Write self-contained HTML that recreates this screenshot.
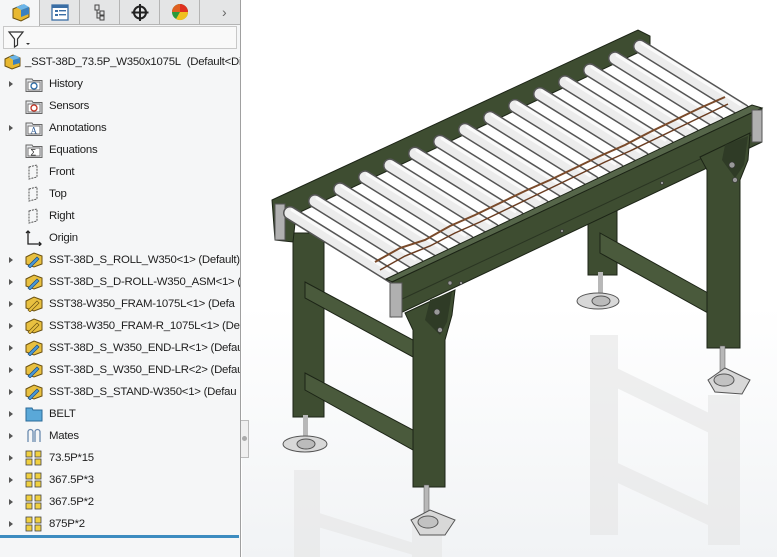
<!DOCTYPE html>
<html><head><meta charset="utf-8"><style>
*{margin:0;padding:0;box-sizing:border-box}
body{width:777px;height:557px;overflow:hidden;background:#fff;font-family:"Liberation Sans",sans-serif;position:relative}
#panel{position:absolute;left:0;top:0;width:241px;height:557px;background:#f5f6f7;border-right:1px solid #a0a0a0}
#tabs{position:absolute;left:0;top:0;width:240px;height:25px;background:#e4e5e6;border-bottom:1px solid #b4b4b4}
.tab{position:absolute;top:0;width:40px;height:25px;border-right:1px solid #b4b4b4}
#filter{position:absolute;left:3px;top:26px;width:234px;height:23px;border:1px solid #c8c8c8;background:#f9f9f9}
.row{position:absolute;left:0;height:22px;line-height:22px;font-size:11.4px;letter-spacing:-0.25px;color:#1e1e1e;white-space:nowrap;width:240px;overflow:hidden}
.arr{position:absolute;left:9px;top:8px;width:0;height:0;border-left:4px solid #555;border-top:3.5px solid transparent;border-bottom:3.5px solid transparent}
.ic{position:absolute;left:25px;top:3px;width:18px;height:16px}
.tx{position:absolute;left:49px;top:0}
#view{position:absolute;left:242px;top:0;width:535px;height:557px;background:linear-gradient(#ffffff 0%,#ffffff 55%,#f1f3f5 100%)}
</style></head><body>
<div id="view">
<svg width="535" height="557" viewBox="242 0 535 557" style="position:absolute;left:0;top:0">
<!-- reflections -->
<g fill="#e6e6e6" opacity="0.6">
<rect x="294" y="470" width="26" height="87"/>
<rect x="412" y="520" width="30" height="37"/>
<polygon points="294,505 420,545 420,557 294,520"/>
<rect x="590" y="335" width="28" height="200"/>
<rect x="708" y="395" width="32" height="150"/>
<polygon points="590,355 740,428 740,448 590,375"/>
<polygon points="590,450 740,520 740,540 590,470"/>
</g>
<!-- back legs -->
<g fill="#3e4d31" stroke="#1c2416" stroke-width="1">
<rect x="293" y="233" width="31" height="184"/>
<rect x="588" y="205" width="29" height="70"/>
</g>
<!-- back feet -->
<g>
<rect x="303" y="415" width="5" height="28" fill="#b8b8b8"/>
<ellipse cx="305" cy="444" rx="22" ry="8" fill="#d8d8d8" stroke="#555"/>
<ellipse cx="306" cy="444" rx="9" ry="5" fill="#bbb" stroke="#555"/>
<rect x="598" y="272" width="5" height="28" fill="#b8b8b8"/>
<ellipse cx="598" cy="301" rx="21" ry="8" fill="#d8d8d8" stroke="#555"/>
<ellipse cx="601" cy="301" rx="9" ry="5" fill="#bbb" stroke="#555"/>
</g>
<!-- crossbars -->
<g fill="#4a5a3c" stroke="#1c2416" stroke-width="1">
<polygon points="305,282 413,340 413,357 305,298"/>
<polygon points="305,373 413,430 413,450 305,390"/>
<polygon points="600,233 708,293 708,313 600,253"/>
</g>
<!-- back rail -->
<polygon points="272,200 638,30 650,36 650,47 296,214 293,242 275,240" fill="#3e4d31" stroke="#1c2416"/>
<rect x="275" y="204" width="10" height="36" fill="#b0b0b0" stroke="#555"/>
<!-- rollers -->
<g stroke-linecap="round">
<g id="r">
<line x1="290" y1="213" x2="393" y2="277" stroke="#555" stroke-width="14"/>
<line x1="290" y1="213" x2="393" y2="277" stroke="#ececec" stroke-width="11"/>
<line x1="292" y1="210" x2="390" y2="271" stroke="#fafafa" stroke-width="3"/>
</g>
<use href="#r" transform="translate(25,-11.9)"/>
<use href="#r" transform="translate(50,-23.8)"/>
<use href="#r" transform="translate(75,-35.7)"/>
<use href="#r" transform="translate(100,-47.6)"/>
<use href="#r" transform="translate(125,-59.5)"/>
<use href="#r" transform="translate(150,-71.4)"/>
<use href="#r" transform="translate(175,-83.3)"/>
<use href="#r" transform="translate(200,-95.2)"/>
<use href="#r" transform="translate(225,-107.1)"/>
<use href="#r" transform="translate(250,-119)"/>
<use href="#r" transform="translate(275,-130.9)"/>
<use href="#r" transform="translate(300,-142.8)"/>
<use href="#r" transform="translate(325,-154.7)"/>
<use href="#r" transform="translate(350,-166.6)"/>
</g>
<!-- chains -->
<polyline points="375,262 400,248 425,240 450,226 475,215 500,203 525,191 550,180 575,168 600,156 625,145 650,132 675,120 700,108 725,97" fill="none" stroke="#7a4a2a" stroke-width="2"/>
<polyline points="380,270 405,256 430,246 455,233 480,222 505,210 530,198 555,186 580,174 605,162 630,151 655,139 680,127 705,115 728,104" fill="none" stroke="#6a3c20" stroke-width="1.5"/>
<!-- front rail -->
<polygon points="386,279 752,105 762,108 392,282" fill="#56664a" stroke="#1c2416"/>
<polygon points="392,282 762,108 762,142 392,317" fill="#3e4d31" stroke="#1c2416"/>
<line x1="400" y1="300" x2="760" y2="131" stroke="#2a3522" stroke-width="1"/>
<rect x="390" y="283" width="12" height="34" fill="#b0b0b0" stroke="#555"/>
<rect x="752" y="110" width="10" height="32" fill="#b0b0b0" stroke="#555"/>
<!-- front legs -->
<g fill="#3e4d31" stroke="#1c2416">
<polygon points="405,313 455,290 452,315 445,340 445,487 413,487 413,330"/>
<polygon points="700,157 750,133 748,160 740,180 740,348 707,348 707,170"/>
</g>
<g fill="#2f3b26">
<polygon points="430,300 452,292 447,322 440,335 425,320"/>
<polygon points="725,145 748,136 744,165 735,178 722,160"/>
</g>
<g fill="#999" stroke="#333" stroke-width="0.6">
<circle cx="437" cy="312" r="3"/><circle cx="440" cy="330" r="2.5"/>
<circle cx="732" cy="165" r="3"/><circle cx="735" cy="180" r="2.5"/>
<circle cx="450" cy="283" r="2"/><circle cx="461" cy="283" r="1.5"/><circle cx="562" cy="231" r="1.5"/><circle cx="662" cy="183" r="1.5"/>
</g>
<!-- front feet -->
<g>
<rect x="424" y="485" width="5" height="30" fill="#b8b8b8" stroke="#555" stroke-width="0.5"/>
<polygon points="411,520 430,510 455,520 445,535 420,535" fill="#d8d8d8" stroke="#555"/>
<ellipse cx="428" cy="522" rx="10" ry="6" fill="#c2c2c2" stroke="#555"/>
<rect x="720" y="346" width="5" height="28" fill="#b8b8b8" stroke="#555" stroke-width="0.5"/>
<polygon points="708,380 725,368 750,380 742,394 715,392" fill="#d8d8d8" stroke="#555"/>
<ellipse cx="724" cy="380" rx="10" ry="6" fill="#c2c2c2" stroke="#555"/>
</g>
</svg>
</div>

<div id="panel">
<div id="tabs">
<div class="tab" style="left:0;background:#f5f6f7;height:26px">
<svg width="40" height="25"><polygon points="13,9 22,5 29,8 29,17 21,21 13,18" fill="#e8b830" stroke="#6a5010"/><polygon points="16,7 24,4 29,7 21,10" fill="#6ab4e8"/><polygon points="21,10 29,7 29,14 21,17" fill="#3a80c0"/></svg></div>
<div class="tab" style="left:40px"><svg width="40" height="25"><rect x="12" y="5" width="16" height="15" fill="#fff" stroke="#3a6ea5" stroke-width="1.3"/><rect x="12" y="5" width="16" height="3" fill="#3a6ea5"/><rect x="15" y="10" width="3" height="2" fill="#3a6ea5"/><rect x="19" y="10" width="7" height="1.4" fill="#3a6ea5"/><rect x="15" y="14" width="3" height="2" fill="#3a6ea5"/><rect x="19" y="14" width="7" height="1.4" fill="#3a6ea5"/></svg></div>
<div class="tab" style="left:80px"><svg width="40" height="25"><rect x="15" y="5" width="4" height="5" fill="none" stroke="#444"/><rect x="20" y="11" width="4" height="4" fill="none" stroke="#444"/><rect x="20" y="16" width="4" height="4" fill="none" stroke="#444"/><path d="M17 10v8h3M17 13h3" stroke="#444" fill="none"/></svg></div>
<div class="tab" style="left:120px"><svg width="40" height="25"><circle cx="20" cy="12.5" r="6" fill="none" stroke="#222" stroke-width="2"/><path d="M20 4v17M11.5 12.5h17" stroke="#222" stroke-width="2"/></svg></div>
<div class="tab" style="left:160px"><svg width="40" height="25"><circle cx="20" cy="12" r="8" fill="#2a9a3a"/><path d="M20 12L20 4A8 8 0 0 1 28 12Z" fill="#e03020"/><path d="M20 12L28 12A8 8 0 0 1 16 19Z" fill="#f0c020"/><path d="M20 12L12 12A8 8 0 0 1 20 4Z" fill="#e06020"/></svg></div>
<div style="position:absolute;left:222px;top:4px;font-size:14px;color:#666">&#8250;</div>
</div>
<div id="filter"><svg width="30" height="22" style="position:absolute;left:2px;top:1px"><path d="M3 4h14l-5.5 7v6l-3 2v-8z" fill="#fff" stroke="#333" stroke-width="1.2"/><path d="M20 15h4l-2 2z" fill="#333"/></svg></div>

<div class="row" style="top:51px"><svg class="ic" style="left:4px" viewBox="0 0 18 16"><polygon points="1,5 9,1 16,4 16,12 8,15 1,12" fill="#e8b830" stroke="#6a5010"/><polygon points="5,3 11,1 16,4 9,6" fill="#6ab4e8"/><polygon points="9,6 16,4 16,9 9,11" fill="#3a80c0"/></svg><span class="tx" style="left:25px">_SST-38D_73.5P_W350x1075L&nbsp; (Default&lt;Display State-1&gt;)</span></div>

<div class="row" style="top:73px"><span class="arr"></span><svg class="ic" viewBox="0 0 18 16"><path d="M1 3h6l1 1.5h9v11H1z" fill="#e8eaec" stroke="#666"/><rect x="3" y="6" width="12" height="8" fill="#fff" stroke="#777"/><circle cx="9" cy="10" r="3" fill="none" stroke="#2a6aa5" stroke-width="1.3"/></svg><span class="tx">History</span></div>
<div class="row" style="top:95px"><svg class="ic" viewBox="0 0 18 16"><path d="M1 3h6l1 1.5h9v11H1z" fill="#e8eaec" stroke="#666"/><rect x="3" y="6" width="12" height="8" fill="#fff" stroke="#777"/><circle cx="9" cy="10" r="3" fill="none" stroke="#c03020" stroke-width="1.3"/></svg><span class="tx">Sensors</span></div>
<div class="row" style="top:117px"><span class="arr"></span><svg class="ic" viewBox="0 0 18 16"><path d="M1 3h6l1 1.5h9v11H1z" fill="#e8eaec" stroke="#666"/><rect x="3" y="6" width="12" height="8" fill="#fff" stroke="#777"/><text x="5.5" y="13.5" font-size="9" font-family="Liberation Serif" fill="#2a5a95">A</text></svg><span class="tx">Annotations</span></div>
<div class="row" style="top:139px"><svg class="ic" viewBox="0 0 18 16"><path d="M1 3h6l1 1.5h9v11H1z" fill="#e8eaec" stroke="#666"/><rect x="3" y="6" width="12" height="8" fill="#fff" stroke="#777"/><text x="5.5" y="13.5" font-size="9" fill="#333">&#931;</text></svg><span class="tx">Equations</span></div>
<div class="row" style="top:161px"><svg class="ic" viewBox="0 0 18 16"><path d="M4 3l8-2v12l-8 2z" fill="none" stroke="#555" stroke-dasharray="2,1"/></svg><span class="tx">Front</span></div>
<div class="row" style="top:183px"><svg class="ic" viewBox="0 0 18 16"><path d="M4 3l8-2v12l-8 2z" fill="none" stroke="#555" stroke-dasharray="2,1"/></svg><span class="tx">Top</span></div>
<div class="row" style="top:205px"><svg class="ic" viewBox="0 0 18 16"><path d="M4 3l8-2v12l-8 2z" fill="none" stroke="#555" stroke-dasharray="2,1"/></svg><span class="tx">Right</span></div>
<div class="row" style="top:227px"><svg class="ic" viewBox="0 0 18 16"><path d="M3 1v13h13M1 3l2-2 2 2M14 12l2 2-2 2" fill="none" stroke="#222" stroke-width="1.3"/></svg><span class="tx">Origin</span></div>

<div class="row" style="top:249px"><span class="arr"></span><svg class="ic" viewBox="0 0 18 16"><polygon points="1,5 9,1 17,4 17,12 9,15 1,12" fill="#e8c040" stroke="#6a5010"/><path d="M3 14l9-9 2 2-9 9z" fill="#4a9ad8" stroke="#1a4a80" stroke-width="0.7"/></svg><span class="tx">SST-38D_S_ROLL_W350&lt;1&gt; (Default)</span></div>
<div class="row" style="top:271px"><span class="arr"></span><svg class="ic" viewBox="0 0 18 16"><polygon points="1,5 9,1 17,4 17,12 9,15 1,12" fill="#e8c040" stroke="#6a5010"/><path d="M3 14l9-9 2 2-9 9z" fill="#4a9ad8" stroke="#1a4a80" stroke-width="0.7"/></svg><span class="tx">SST-38D_S_D-ROLL-W350_ASM&lt;1&gt; (</span></div>
<div class="row" style="top:293px"><span class="arr"></span><svg class="ic" viewBox="0 0 18 16"><polygon points="1,5 9,1 17,4 17,12 9,15 1,12" fill="#e8c040" stroke="#6a5010"/><path d="M3 14l9-9 2 2-9 9z" fill="#e8c040" stroke="#6a5010" stroke-width="0.7"/></svg><span class="tx">SST38-W350_FRAM-1075L&lt;1&gt; (Defa</span></div>
<div class="row" style="top:315px"><span class="arr"></span><svg class="ic" viewBox="0 0 18 16"><polygon points="1,5 9,1 17,4 17,12 9,15 1,12" fill="#e8c040" stroke="#6a5010"/><path d="M3 14l9-9 2 2-9 9z" fill="#e8c040" stroke="#6a5010" stroke-width="0.7"/></svg><span class="tx">SST38-W350_FRAM-R_1075L&lt;1&gt; (De</span></div>
<div class="row" style="top:337px"><span class="arr"></span><svg class="ic" viewBox="0 0 18 16"><polygon points="1,5 9,1 17,4 17,12 9,15 1,12" fill="#e8c040" stroke="#6a5010"/><path d="M3 14l9-9 2 2-9 9z" fill="#4a9ad8" stroke="#1a4a80" stroke-width="0.7"/></svg><span class="tx">SST-38D_S_W350_END-LR&lt;1&gt; (Defau</span></div>
<div class="row" style="top:359px"><span class="arr"></span><svg class="ic" viewBox="0 0 18 16"><polygon points="1,5 9,1 17,4 17,12 9,15 1,12" fill="#e8c040" stroke="#6a5010"/><path d="M3 14l9-9 2 2-9 9z" fill="#4a9ad8" stroke="#1a4a80" stroke-width="0.7"/></svg><span class="tx">SST-38D_S_W350_END-LR&lt;2&gt; (Defau</span></div>
<div class="row" style="top:381px"><span class="arr"></span><svg class="ic" viewBox="0 0 18 16"><polygon points="1,5 9,1 17,4 17,12 9,15 1,12" fill="#e8c040" stroke="#6a5010"/><path d="M3 14l9-9 2 2-9 9z" fill="#4a9ad8" stroke="#1a4a80" stroke-width="0.7"/></svg><span class="tx">SST-38D_S_STAND-W350&lt;1&gt; (Defau</span></div>
<div class="row" style="top:403px"><span class="arr"></span><svg class="ic" viewBox="0 0 18 16"><path d="M1 2h6l1 2h9v11H1z" fill="#5aa8d8" stroke="#2a6a98"/></svg><span class="tx">BELT</span></div>
<div class="row" style="top:425px"><span class="arr"></span><svg class="ic" viewBox="0 0 18 16"><path d="M3 14V4a2.5 2.5 0 0 1 5 0v10M10 14V4a2.5 2.5 0 0 1 5 0v10" fill="none" stroke="#6a8ab0" stroke-width="1.3"/></svg><span class="tx">Mates</span></div>
<div class="row" style="top:447px"><span class="arr"></span><svg class="ic" viewBox="0 0 18 16"><g fill="#f0d040" stroke="#444" stroke-width="0.8"><rect x="1" y="1" width="6" height="6"/><rect x="10" y="1" width="6" height="6"/><rect x="1" y="9" width="6" height="6"/><rect x="10" y="9" width="6" height="6"/></g></svg><span class="tx">73.5P*15</span></div>
<div class="row" style="top:469px"><span class="arr"></span><svg class="ic" viewBox="0 0 18 16"><g fill="#f0d040" stroke="#444" stroke-width="0.8"><rect x="1" y="1" width="6" height="6"/><rect x="10" y="1" width="6" height="6"/><rect x="1" y="9" width="6" height="6"/><rect x="10" y="9" width="6" height="6"/></g></svg><span class="tx">367.5P*3</span></div>
<div class="row" style="top:491px"><span class="arr"></span><svg class="ic" viewBox="0 0 18 16"><g fill="#f0d040" stroke="#444" stroke-width="0.8"><rect x="1" y="1" width="6" height="6"/><rect x="10" y="1" width="6" height="6"/><rect x="1" y="9" width="6" height="6"/><rect x="10" y="9" width="6" height="6"/></g></svg><span class="tx">367.5P*2</span></div>
<div class="row" style="top:513px"><span class="arr"></span><svg class="ic" viewBox="0 0 18 16"><g fill="#f0d040" stroke="#444" stroke-width="0.8"><rect x="1" y="1" width="6" height="6"/><rect x="10" y="1" width="6" height="6"/><rect x="1" y="9" width="6" height="6"/><rect x="10" y="9" width="6" height="6"/></g></svg><span class="tx">875P*2</span></div>
<div style="position:absolute;left:0;top:535px;width:239px;height:3px;background:#3d8cc0"></div>
</div>
<div style="position:absolute;left:241px;top:420px;width:8px;height:38px;background:#f0f0f0;border:1px solid #bbb;border-left:none"></div>
<div style="position:absolute;left:242px;top:436px;width:5px;height:5px;border-radius:50%;background:#aaa"></div>
</body></html>
